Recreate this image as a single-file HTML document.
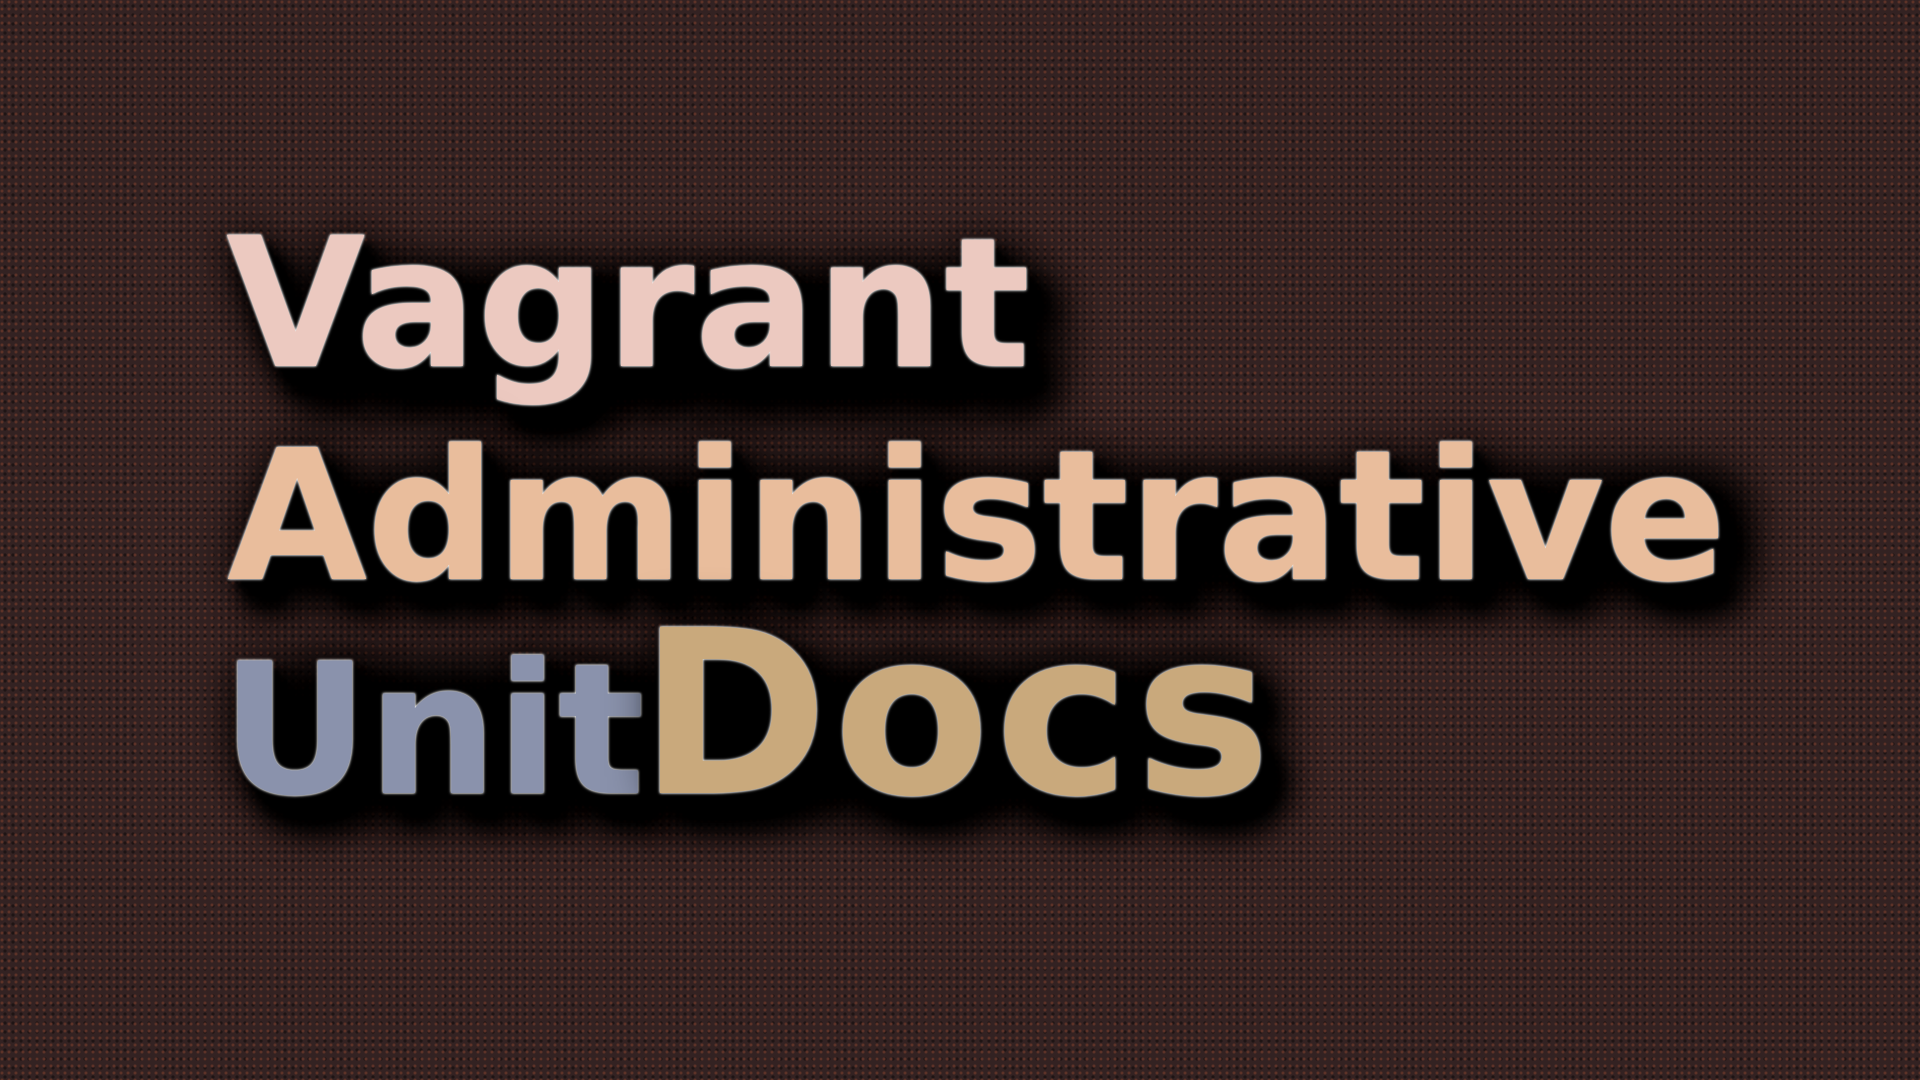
<!DOCTYPE html>
<html><head><meta charset="utf-8"><style>
html,body{margin:0;width:1920px;height:1080px;overflow:hidden}
body{background-color:#332222;
background-image:
radial-gradient(circle at 2px 2px,#5e3328 1px,transparent 2px),
radial-gradient(circle at 5px 6px,#1e1414 1.2px,transparent 2px);
background-size:7px 7px,8px 9px;}
.b{position:absolute;background:#000;filter:blur(22px);border-radius:30px}
.t{position:absolute;font-family:"DejaVu Sans","Liberation Sans",sans-serif;font-weight:bold;line-height:1;white-space:nowrap;
text-shadow:0 0 2px #fff,0 0 3px #ddd,8px 10px 6px #000,14px 18px 10px #000,18px 24px 16px #000,22px 30px 22px #000,10px 14px 30px #000,24px 34px 40px #000,0 0 50px #000;}
</style></head><body>
<div class="b" style="left:300px;top:270px;width:760px;height:150px"></div>
<div class="b" style="left:280px;top:470px;width:1470px;height:130px"></div>
<div class="b" style="left:270px;top:660px;width:1000px;height:160px"></div>
<div class="t" style="left:226px;top:215px;font-size:180px;color:#ecc9c0">Vagrant</div>
<div class="t" style="left:227px;top:426px;font-size:181px;color:#e9bd9c;letter-spacing:-0.5px">Administrative</div>
<div class="t" style="left:221px;top:639px;font-size:182px;color:#8a92ac;letter-spacing:-1px">Unit</div>
<div class="t" style="left:639px;top:600px;font-size:228px;color:#c9a97c;letter-spacing:5px">Docs</div>
</body></html>
